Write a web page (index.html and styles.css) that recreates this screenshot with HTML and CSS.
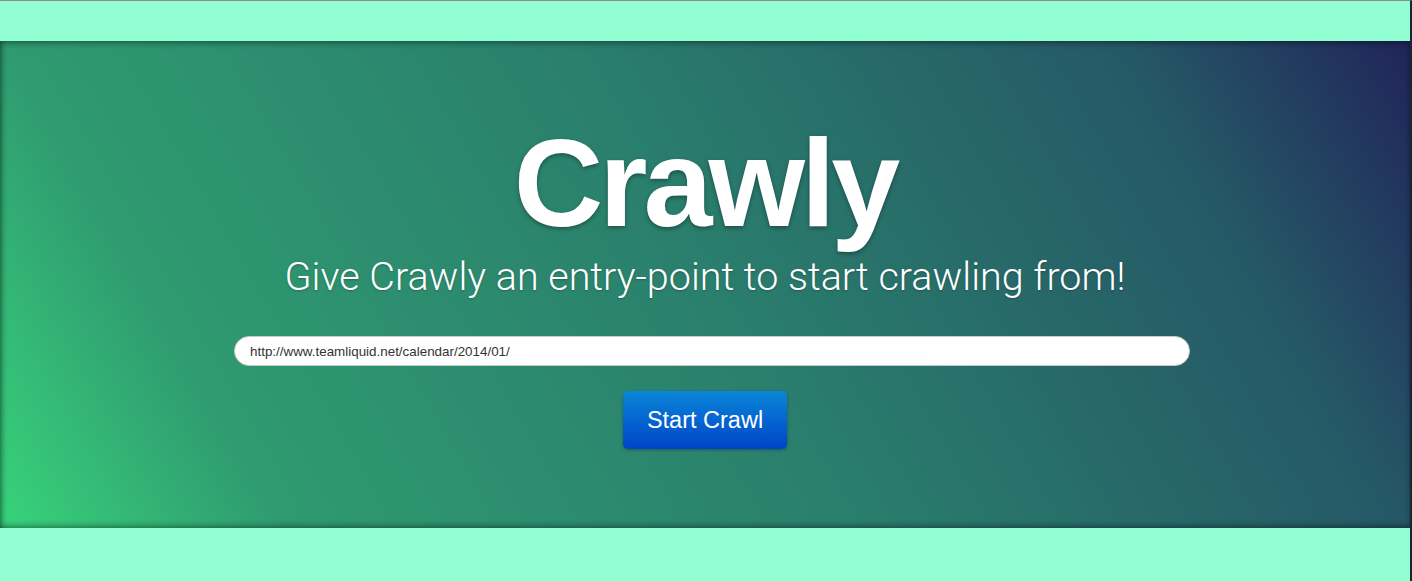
FILE: index.html
```html
<!DOCTYPE html>
<html>
<head>
<meta charset="utf-8">
<title>Crawly</title>
<link rel="stylesheet" href="styles.css">
</head>
<body>
<div class="page">
  <div class="band band-top"></div>
  <section class="hero">
    <h1 class="title">Crawly</h1>
    <p class="subtitle">Give Crawly an entry-point to start crawling from!</p>
    <input class="url" type="text" value="http://www.teamliquid.net/calendar/2014/01/">
    <button class="start">Start Crawl</button>
  </section>
  <div class="band band-bottom"></div>
</div>
</body>
</html>
```

FILE: styles.css
```css
html, body {
  margin: 0;
  padding: 0;
  height: 100%;
}
body {
  background: #92ffd3;
  font-family: "Liberation Sans", Arial, sans-serif;
  overflow: hidden;
}
.page {
  height: 580px;
  border-top: 1px solid #8a8a8a;
  border-right: 2px solid #1c2433;
  display: flex;
  flex-direction: column;
  background: #92ffd3;
}
.band-top {
  height: 40px;
  flex: none;
}
.band-bottom {
  flex: 1;
}
.hero {
  height: 487px;
  flex: none;
  box-sizing: border-box;
  background: linear-gradient(60deg, #38d37b 0%, #2f9a70 17%, #2a7f6d 50%, #255866 83%, #20245a 100%);
  box-shadow: inset 0 4px 6px -2px rgba(0,0,0,0.35), inset 0 -4px 6px -2px rgba(0,0,0,0.35), inset 5px 0 6px -3px rgba(0,0,0,0.3);
  display: flex;
  flex-direction: column;
  align-items: center;
  padding-top: 80px;
}
.title {
  margin: 0;
  color: #fff;
  font-family: "Liberation Sans", Arial, sans-serif;
  font-weight: 700;
  font-size: 124px;
  line-height: 124px;
  letter-spacing: -4px;
  text-shadow: 0 2px 4px rgba(0,0,0,0.35);
}
.subtitle {
  margin: 10px 0 0;
  color: #fff;
  font-family: Roboto, "Liberation Sans", sans-serif;
  font-weight: 300;
  font-size: 39.5px;
  line-height: 44px;
  text-shadow: 0 1px 2px rgba(0,0,0,0.25);
}
.url {
  margin: 37px 0 0 14px;
  width: 956px;
  height: 30px;
  box-sizing: border-box;
  border: 1px solid #c8c8c8;
  border-radius: 15px;
  background: #fff;
  padding: 0 15px;
  font-family: "Liberation Sans", Arial, sans-serif;
  font-size: 13.4px;
  color: #333;
  outline: none;
}
.start {
  margin-top: 25px;
  width: 164px;
  height: 58px;
  border: none;
  border-radius: 5px;
  background: linear-gradient(to bottom, #0a86d8, #0044c8);
  color: #fff;
  font-family: "Liberation Sans", Arial, sans-serif;
  font-size: 23.5px;
  box-shadow: 0 1px 3px rgba(0,0,0,0.3);
  cursor: pointer;
}
```
